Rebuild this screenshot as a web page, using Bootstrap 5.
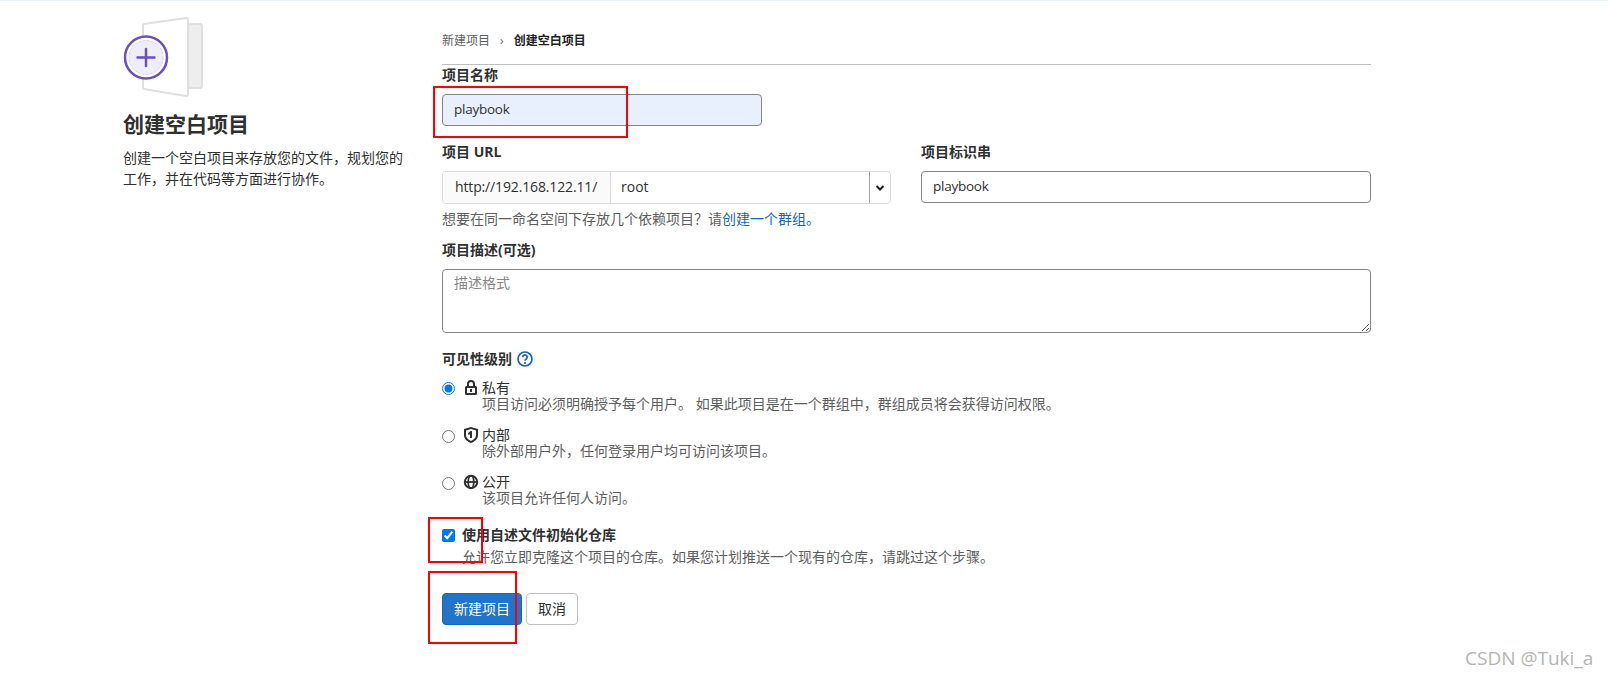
<!DOCTYPE html>
<html lang="zh-CN">
<head>
<meta charset="UTF-8">
<title>创建空白项目</title>
<link href="https://cdn.jsdelivr.net/npm/bootstrap@5.3.3/dist/css/bootstrap.min.css" rel="stylesheet">
<style>
html,body{height:100%}
body{margin:0;font-family:"Open Sans","Noto Sans CJK SC",sans-serif;font-size:14px;color:#303030;background:#fff;
  border-top:1px solid #e6f1fa;position:relative;overflow:hidden}
.page-wrap{padding-left:123px}
.side-col{width:319px;flex:none;padding-top:16px}
.side-col svg{display:block;width:80px;height:80px}
.side-title{font-size:21px;font-weight:700;line-height:28px;margin:13px 0 9px;color:#303030}
.side-desc{width:285px;line-height:21px;margin:0;color:#303030}
.form-col{width:929px;flex:none}
.crumbs{height:64px;border-bottom:1px solid #bfbfbf;font-size:12px;padding-top:30px;line-height:20px;color:#5e5e5e}
.crumbs b{color:#1f1f1f}
.crumbs i{font-style:normal;margin:0 10px}
.fld-label{display:block;font-weight:700;line-height:20px;margin-bottom:9px;color:#303030}
.form-control.gl-input{font-size:14px;line-height:20px;height:32px;padding:4px 11px 6px;border:1px solid #868686;border-radius:4px;color:#303030;box-shadow:none}
.form-control.gl-input[value]{font-size:13.500px;letter-spacing:-.25px}
.form-control.name-input{width:320px;background:#e8f0fe}
.name-input.form-control:focus{background:#e8f0fe}
.url-group{height:33px;border:1px solid #dcdcde;border-radius:4px;overflow:hidden;width:449px}
.url-prefix{width:168px;background:#fafafa;border-right:1px solid #dcdcde;padding-left:12px;line-height:29px;letter-spacing:-.14px;color:#303030;white-space:nowrap}
.url-value{flex:1;padding-left:10px;line-height:30px;color:#303030}
.url-caret{width:21px;border-left:1px solid #a4a3a8;display:flex;align-items:center;justify-content:center}
.url-caret svg{width:10px;height:10px}
.help-line{line-height:20px;margin:5px 0 11px;color:#5e5e5e}
.help-line a{color:#1068bf;text-decoration:none}
.slug-col{width:450px}
textarea.form-control.gl-input{height:64px;padding-top:3px;resize:vertical}
textarea.form-control.gl-input::placeholder{color:#868686}
.vis-label{margin:16px 0 11px;font-weight:700;line-height:20px;display:flex;align-items:center;gap:5px}
.vis-label svg{width:16px;height:16px}
.vis-item{display:flex;min-height:32px;margin-bottom:15px}
.vis-item input{width:13px;height:13px;margin:2px 8px 0 0;flex:none}
.vis-item + .vis-item input{margin-top:3px}
.vis-icon{width:16px;height:16px;margin-right:3px;flex:none;fill:#303030}
.vis-text{line-height:16px}
.vis-text small{display:block;font-size:14px;color:#5e5e5e}
.init-row{display:flex;margin-top:21px}
.init-row input{width:13px;height:13px;margin:2px 7px 0 0;flex:none}
.init-row b{display:block;line-height:16px}
.init-row small{display:block;font-size:14px;line-height:20px;margin-top:4px;color:#5e5e5e}
.act-row{margin-top:26px;gap:4px}
.act-row .btn{font-size:14px;line-height:20px;height:32px;padding:5px 11px;border-radius:4px}
.btn-create{background:#1f75cb;border:1px solid #1068bf;color:#fff}
.btn-cancel{background:#fff;border:1px solid #bfbfbf;color:#303030}
.red-mark{position:absolute;border:2px solid #f00;pointer-events:none}
.mark-a{left:433px;top:85px;width:195px;height:52px}
.mark-b{left:428px;top:516px;width:55px;height:46px}
.mark-c{left:428px;top:570px;width:89px;height:73px}
.wm{position:absolute;left:1465px;top:645px;font-size:19px;line-height:24px;color:#b4b4b4;white-space:nowrap}
</style>
</head>
<body>
<div class="page-wrap d-flex">
  <aside class="side-col">
    <svg viewBox="0 0 80 80">
      <rect x="65" y="7" width="14" height="64" rx="2" fill="#eee" stroke="#dfdfdf" stroke-width="2"/>
      <path d="M21 7 63 1q2 0 2 2v74q0 2-2 2L21 72q-1 0-1-2V8q0-1 1-1z" fill="#fff" stroke="#dfdfdf" stroke-width="2"/>
      <circle cx="23" cy="40.500" r="21" fill="#fff" stroke="#6b4fbb" stroke-width="2.500"/>
      <circle cx="23" cy="40.500" r="17" fill="#efedf8" stroke="#d9d3ef" stroke-width="1" stroke-dasharray="3 1"/>
      <path d="M23 32v17M14.500 40.500h17" stroke="#6b4fbb" stroke-width="2.500" stroke-linecap="round" fill="none"/>
    </svg>
    <h4 class="side-title">创建空白项目</h4>
    <p class="side-desc">创建一个空白项目来存放您的文件，规划您的工作，并在代码等方面进行协作。</p>
  </aside>

  <main class="form-col">
    <nav class="crumbs">新建项目<i>›</i><b>创建空白项目</b></nav>
    <form>
      <div class="mb-3">
        <label class="fld-label" for="pname">项目名称</label>
        <input id="pname" class="form-control gl-input name-input" value="playbook">
      </div>
      <div class="d-flex justify-content-between">
        <div>
          <label class="fld-label">项目 URL</label>
          <div class="url-group d-flex">
            <div class="url-prefix">http://192.168.122.11/</div>
            <div class="url-value">root</div>
            <div class="url-caret"><svg viewBox="0 0 10 10"><path d="M1.500 3 5 6.500 8.500 3" fill="none" stroke="#1f1f1f" stroke-width="2"/></svg></div>
          </div>
        </div>
        <div class="slug-col">
          <label class="fld-label" for="slug">项目标识串</label>
          <input id="slug" class="form-control gl-input" value="playbook">
        </div>
      </div>
      <p class="help-line">想要在同一命名空间下存放几个依赖项目？请<a href="#">创建一个群组。</a></p>
      <label class="fld-label" for="pdesc">项目描述(可选)</label>
      <textarea id="pdesc" class="form-control gl-input" placeholder="描述格式"></textarea>

      <div class="vis-label">可见性级别
        <svg viewBox="0 0 16 16"><circle cx="8" cy="8" r="7" fill="none" stroke="#1068bf" stroke-width="1.700"/><path d="M5.800 6.200a2.200 2.200 0 1 1 3.400 1.800c-.8.500-1.200.9-1.200 1.800" fill="none" stroke="#1068bf" stroke-width="1.700"/><circle cx="8" cy="12" r="1.100" fill="#1068bf"/></svg>
      </div>

      <div class="vis-item">
        <input type="radio" name="vis" checked>
        <svg class="vis-icon" viewBox="0 0 16 16"><path fill-rule="evenodd" d="M4 6V4a4 4 0 0 1 8 0v2h.500a1.500 1.500 0 0 1 1.500 1.500v6a1.500 1.500 0 0 1-1.500 1.500h-9A1.500 1.500 0 0 1 2 13.500v-6A1.500 1.500 0 0 1 3.500 6H4zm2 0h4V4a2 2 0 0 0-4 0v2zM4 8v5h8V8H4zm3 1h2v3H7V9z"/></svg>
        <div class="vis-text">私有<small>项目访问必须明确授予每个用户。 如果此项目是在一个群组中，群组成员将会获得访问权限。</small></div>
      </div>
      <div class="vis-item">
        <input type="radio" name="vis">
        <svg class="vis-icon" viewBox="0 0 16 16"><path fill-rule="evenodd" d="M8 0l7 2v6c0 4-3 6.500-7 8-4-1.500-7-4-7-8V2l7-2zM3 3.500V8c0 2.800 2 4.700 5 5.900 3-1.200 5-3.100 5-5.900V3.500L8 2.100 3 3.500zM9 4v7H7V7.200L5.500 8 5 6.300 7.500 4H9z"/></svg>
        <div class="vis-text">内部<small>除外部用户外，任何登录用户均可访问该项目。</small></div>
      </div>
      <div class="vis-item">
        <input type="radio" name="vis">
        <svg class="vis-icon" viewBox="0 0 16 16"><circle cx="8" cy="8" r="6.200" fill="none" stroke="#303030" stroke-width="2"/><ellipse cx="8" cy="8" rx="2.800" ry="6.200" fill="none" stroke="#303030" stroke-width="1.800"/><path d="M1.500 8h13" stroke="#303030" stroke-width="1.800"/></svg>
        <div class="vis-text">公开<small>该项目允许任何人访问。</small></div>
      </div>

      <div class="init-row">
        <input type="checkbox" checked>
        <div>
          <b>使用自述文件初始化仓库</b>
          <small>允许您立即克隆这个项目的仓库。如果您计划推送一个现有的仓库，请跳过这个步骤。</small>
        </div>
      </div>

      <div class="act-row d-flex">
        <button type="button" class="btn btn-create">新建项目</button>
        <button type="button" class="btn btn-cancel">取消</button>
      </div>
    </form>
  </main>
</div>

<div class="red-mark mark-a"></div>
<div class="red-mark mark-b"></div>
<div class="red-mark mark-c"></div>
<div class="wm">CSDN @Tuki_a</div>

<script src="https://cdn.jsdelivr.net/npm/bootstrap@5.3.3/dist/js/bootstrap.bundle.min.js"></script>
</body>
</html>
